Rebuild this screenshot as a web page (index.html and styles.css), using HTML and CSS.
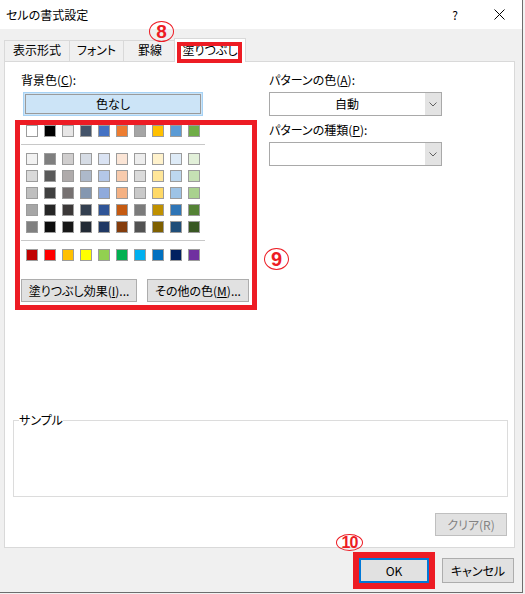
FILE: index.html
```html
<!DOCTYPE html>
<html lang="ja">
<head>
    <meta charset="UTF-8">
    <title>セルの書式設定</title>
    <link rel="stylesheet" href="styles.css">
</head>
<body>
    <div class="dialog">
        <div class="titlebar">
            <span class="title">セルの書式設定</span>
            <span class="help">?</span>
            <svg class="close" width="11" height="11" viewBox="0 0 11 11">
                <path d="M0.5 0.5 L10.5 10.5 M10.5 0.5 L0.5 10.5" stroke="#000" stroke-width="1" fill="none"/>
            </svg>
        </div>

        <div class="tabs">
            <div class="tab tab-1">表示形式</div>
            <div class="tab tab-2">フォント</div>
            <div class="tab tab-3">罫線</div>
            <div class="tab active">
                塗りつぶし
                <span class="mark-box tab-mark"></span>
                <span class="mark-num num-8">8</span>
            </div>
        </div>

        <div class="panel">
            <div class="cols">
                <div class="left">
                    <div class="label">背景色(<u>C</u>):</div>
                    <div class="no-color"><span>色なし</span></div>

                    <div class="palette">
                        <div class="swatches">
                            <span class="sw" style="background:#ffffff"></span>
                            <span class="sw" style="background:#000000"></span>
                            <span class="sw" style="background:#e7e6e6"></span>
                            <span class="sw" style="background:#44546a"></span>
                            <span class="sw" style="background:#4472c4"></span>
                            <span class="sw" style="background:#ed7d31"></span>
                            <span class="sw" style="background:#a5a5a5"></span>
                            <span class="sw" style="background:#ffc000"></span>
                            <span class="sw" style="background:#5b9bd5"></span>
                            <span class="sw" style="background:#70ad47"></span>
                        </div>
                        <div class="sep"></div>
                        <div class="swatches tints">
                            <span class="sw" style="background:#f2f2f2"></span>
                            <span class="sw" style="background:#7f7f7f"></span>
                            <span class="sw" style="background:#d0cece"></span>
                            <span class="sw" style="background:#d6dce5"></span>
                            <span class="sw" style="background:#dae3f3"></span>
                            <span class="sw" style="background:#fbe5d6"></span>
                            <span class="sw" style="background:#ededed"></span>
                            <span class="sw" style="background:#fff2cc"></span>
                            <span class="sw" style="background:#deebf7"></span>
                            <span class="sw" style="background:#e2f0d9"></span>

                            <span class="sw" style="background:#d9d9d9"></span>
                            <span class="sw" style="background:#595959"></span>
                            <span class="sw" style="background:#afabab"></span>
                            <span class="sw" style="background:#adb9ca"></span>
                            <span class="sw" style="background:#b4c7e7"></span>
                            <span class="sw" style="background:#f8cbad"></span>
                            <span class="sw" style="background:#dbdbdb"></span>
                            <span class="sw" style="background:#ffe699"></span>
                            <span class="sw" style="background:#bdd7ee"></span>
                            <span class="sw" style="background:#c5e0b4"></span>

                            <span class="sw" style="background:#bfbfbf"></span>
                            <span class="sw" style="background:#404040"></span>
                            <span class="sw" style="background:#767171"></span>
                            <span class="sw" style="background:#8497b0"></span>
                            <span class="sw" style="background:#8faadc"></span>
                            <span class="sw" style="background:#f4b183"></span>
                            <span class="sw" style="background:#c9c9c9"></span>
                            <span class="sw" style="background:#ffd966"></span>
                            <span class="sw" style="background:#9dc3e6"></span>
                            <span class="sw" style="background:#a9d18e"></span>

                            <span class="sw" style="background:#a6a6a6"></span>
                            <span class="sw" style="background:#262626"></span>
                            <span class="sw" style="background:#3b3838"></span>
                            <span class="sw" style="background:#333f50"></span>
                            <span class="sw" style="background:#2f5597"></span>
                            <span class="sw" style="background:#c55a11"></span>
                            <span class="sw" style="background:#7b7b7b"></span>
                            <span class="sw" style="background:#bf9000"></span>
                            <span class="sw" style="background:#2e75b6"></span>
                            <span class="sw" style="background:#548235"></span>

                            <span class="sw" style="background:#808080"></span>
                            <span class="sw" style="background:#0d0d0d"></span>
                            <span class="sw" style="background:#171717"></span>
                            <span class="sw" style="background:#222a35"></span>
                            <span class="sw" style="background:#203864"></span>
                            <span class="sw" style="background:#843c0c"></span>
                            <span class="sw" style="background:#525252"></span>
                            <span class="sw" style="background:#7f6000"></span>
                            <span class="sw" style="background:#1f4e79"></span>
                            <span class="sw" style="background:#385723"></span>
                        </div>
                        <div class="sep"></div>
                        <div class="swatches">
                            <span class="sw" style="background:#c00000"></span>
                            <span class="sw" style="background:#ff0000"></span>
                            <span class="sw" style="background:#ffc000"></span>
                            <span class="sw" style="background:#ffff00"></span>
                            <span class="sw" style="background:#92d050"></span>
                            <span class="sw" style="background:#00b050"></span>
                            <span class="sw" style="background:#00b0f0"></span>
                            <span class="sw" style="background:#0070c0"></span>
                            <span class="sw" style="background:#002060"></span>
                            <span class="sw" style="background:#7030a0"></span>
                        </div>
                        <div class="palette-buttons">
                            <button class="btn btn-effect">塗りつぶし効果(<u>I</u>)...</button>
                            <button class="btn btn-more">その他の色(<u>M</u>)...</button>
                        </div>
                        <span class="mark-num num-9">9</span>
                    </div>
                </div>

                <div class="right">
                    <div class="label">パターンの色(<u>A</u>):</div>
                    <div class="combo">
                        <span class="combo-value">自動</span>
                        <span class="combo-arrow">
                            <svg width="8" height="5" viewBox="0 0 8 5"><path d="M0.5 0.5 L4 4 L7.5 0.5" stroke="#606060" fill="none"/></svg>
                        </span>
                    </div>
                    <div class="label label-2">パターンの種類(<u>P</u>):</div>
                    <div class="combo">
                        <span class="combo-value"></span>
                        <span class="combo-arrow">
                            <svg width="8" height="5" viewBox="0 0 8 5"><path d="M0.5 0.5 L4 4 L7.5 0.5" stroke="#606060" fill="none"/></svg>
                        </span>
                    </div>
                </div>
            </div>

            <fieldset class="sample">
                <legend>サンプル</legend>
            </fieldset>

            <div class="clear-row">
                <button class="btn btn-clear" disabled>クリア(R)</button>
            </div>
        </div>

        <div class="footer">
            <button class="btn btn-ok">OK<span class="mark-num num-10">10</span></button>
            <button class="btn btn-cancel">キャンセル</button>
        </div>
    </div>
</body>
</html>
```

FILE: styles.css
```css
body {
    margin: 0;
    background-color: #f2f2f2;
    font-family: "Noto Sans CJK JP", "Noto Sans", sans-serif;
    font-size: 12px;
    line-height: 16px;
    color: #000;
    font-feature-settings: "palt";
}
u {
    text-decoration: underline;
    text-underline-offset: 1px;
}
.dialog {
    width: 522px;
    height: 592px;
    background-color: #f0f0f0;
    border-right: 1px solid #6d6d6d;
    border-bottom: 1px solid #6d6d6d;
    display: flex;
    flex-direction: column;
}
.titlebar {
    height: 29px;
    flex-shrink: 0;
    background-color: #fff;
    display: flex;
    align-items: center;
    padding-left: 6px;
}
.title {
    flex: 1;
}
.help {
    width: 8px;
    text-align: center;
    margin-right: 35px;
}
.close {
    margin-right: 17px;
}

/* tabs */
.tabs {
    height: 32px;
    flex-shrink: 0;
    display: flex;
    align-items: flex-end;
    padding-left: 4px;
}
.tab {
    height: 21px;
    box-sizing: border-box;
    border: 1px solid #d9d9d9;
    border-bottom: none;
    margin-right: -1px;
    text-align: center;
    line-height: 18px;
    background-color: #f0f0f0;
}
.tab-1 { width: 66px; }
.tab-2 { width: 55px; }
.tab-3 { width: 54px; }
.tab.active {
    width: 72px;
    height: 24px;
    margin-left: -2px;
    margin-bottom: -1px;
    padding-top: 3px;
    line-height: 16px;
    background-color: #fff;
    position: relative;
    z-index: 1;
}

/* red annotations */
.mark-box {
    position: absolute;
    border: 4px solid #ed1c24;
    box-sizing: border-box;
}
.tab-mark {
    left: 2px;
    top: 3px;
    width: 65px;
    height: 21px;
}
.mark-num {
    position: absolute;
    box-sizing: border-box;
    border: 1.5px solid #ed1c24;
    border-radius: 50%;
    color: #ed1c24;
    font-family: "Liberation Sans", Arial, sans-serif;
    font-weight: bold;
    display: flex;
    align-items: center;
    justify-content: center;
    z-index: 2;
}
.num-8 {
    left: -26px;
    top: -18px;
    width: 25px;
    height: 21px;
    font-size: 19px;
}
.num-9 {
    left: 244px;
    top: 123px;
    width: 25px;
    height: 22px;
    font-size: 20px;
}
.num-10 {
    left: -25px;
    top: -26px;
    width: 27px;
    height: 17px;
    font-size: 16px;
    letter-spacing: -1px;
}

/* panel */
.panel {
    margin-left: 4px;
    width: 511px;
    height: 487px;
    flex-shrink: 0;
    box-sizing: border-box;
    border: 1px solid #d9d9d9;
    background-color: #fff;
    padding-top: 10px;
    display: flex;
    flex-direction: column;
}
.cols {
    display: flex;
}
.left {
    width: 264px;
}
.right {
    width: 173px;
}
.left .label {
    padding-left: 16px;
}
.label-2 {
    margin-top: 6px;
}
.no-color {
    margin: 4px 0 0 18px;
    width: 180px;
    height: 24px;
    box-sizing: border-box;
    border: 1px solid #a6d2f5;
    background-color: #cce4f7;
    padding: 1px;
}
.no-color span {
    display: block;
    height: 100%;
    box-sizing: border-box;
    border: 1px solid #9a9a9a;
    text-align: center;
    line-height: 18px;
}

/* colour palette */
.palette {
    position: relative;
    margin: 4px 0 0 10px;
    width: 242px;
    box-sizing: border-box;
    border: 5px solid #ed1c24;
    padding-bottom: 3px;
}
.swatches {
    display: grid;
    grid-template-columns: repeat(10, 12px);
    column-gap: 6px;
    row-gap: 5px;
    margin-left: 6px;
}
.tints {
    margin-top: 8px;
}
.sw {
    width: 12px;
    height: 12px;
    box-sizing: border-box;
    border: 1px solid #9c9c9c;
}
.sep {
    margin: 7px 0 8px 1px;
    width: 184px;
    height: 1px;
    background-color: #c8c8c8;
}
.sep + .swatches {
    margin-top: 0;
}
.palette-buttons {
    display: flex;
    gap: 10px;
    margin: 18px 0 0 1px;
}
.btn {
    height: 23px;
    box-sizing: border-box;
    border: 1px solid #adadad;
    background-color: #e1e1e1;
    font: inherit;
    font-feature-settings: "palt";
    color: #000;
    padding: 0;
    line-height: 20px;
}
.btn-effect { width: 116px; }
.btn-more { width: 102px; }

/* combos */
.combo {
    display: flex;
    margin-top: 4px;
    height: 24px;
    box-sizing: border-box;
    border: 1px solid #a9a9a9;
    background-color: #fff;
}
.combo-value {
    flex: 1;
    text-align: center;
    line-height: 22px;
}
.combo-arrow {
    width: 16px;
    background-color: #e3e3e3;
    border-left: 1px solid #fff;
    display: flex;
    align-items: center;
    justify-content: center;
}

/* sample */
.sample {
    margin: 102px 0 0 8px;
    width: 495px;
    height: 85px;
    box-sizing: border-box;
    border: 1px solid #dcdcdc;
    padding: 0;
}
.sample legend {
    margin-left: 5px;
    padding: 0;
    line-height: 16px;
}
.clear-row {
    display: flex;
    justify-content: flex-end;
    margin-top: 16px;
    padding-right: 7px;
}
.btn-clear {
    width: 72px;
    border-color: #bfbfbf;
    color: #838383;
}

/* footer */
.footer {
    display: flex;
    justify-content: flex-end;
    gap: 13px;
    padding: 10px 8px 0 0;
}
.btn-ok,
.btn-cancel {
    height: 25px;
    line-height: 21px;
}
.btn-ok {
    width: 70px;
    position: relative;
    border: 2px solid #0078d7;
    outline: 6px solid #ed1c24;
}
.btn-cancel {
    width: 72px;
}
```
